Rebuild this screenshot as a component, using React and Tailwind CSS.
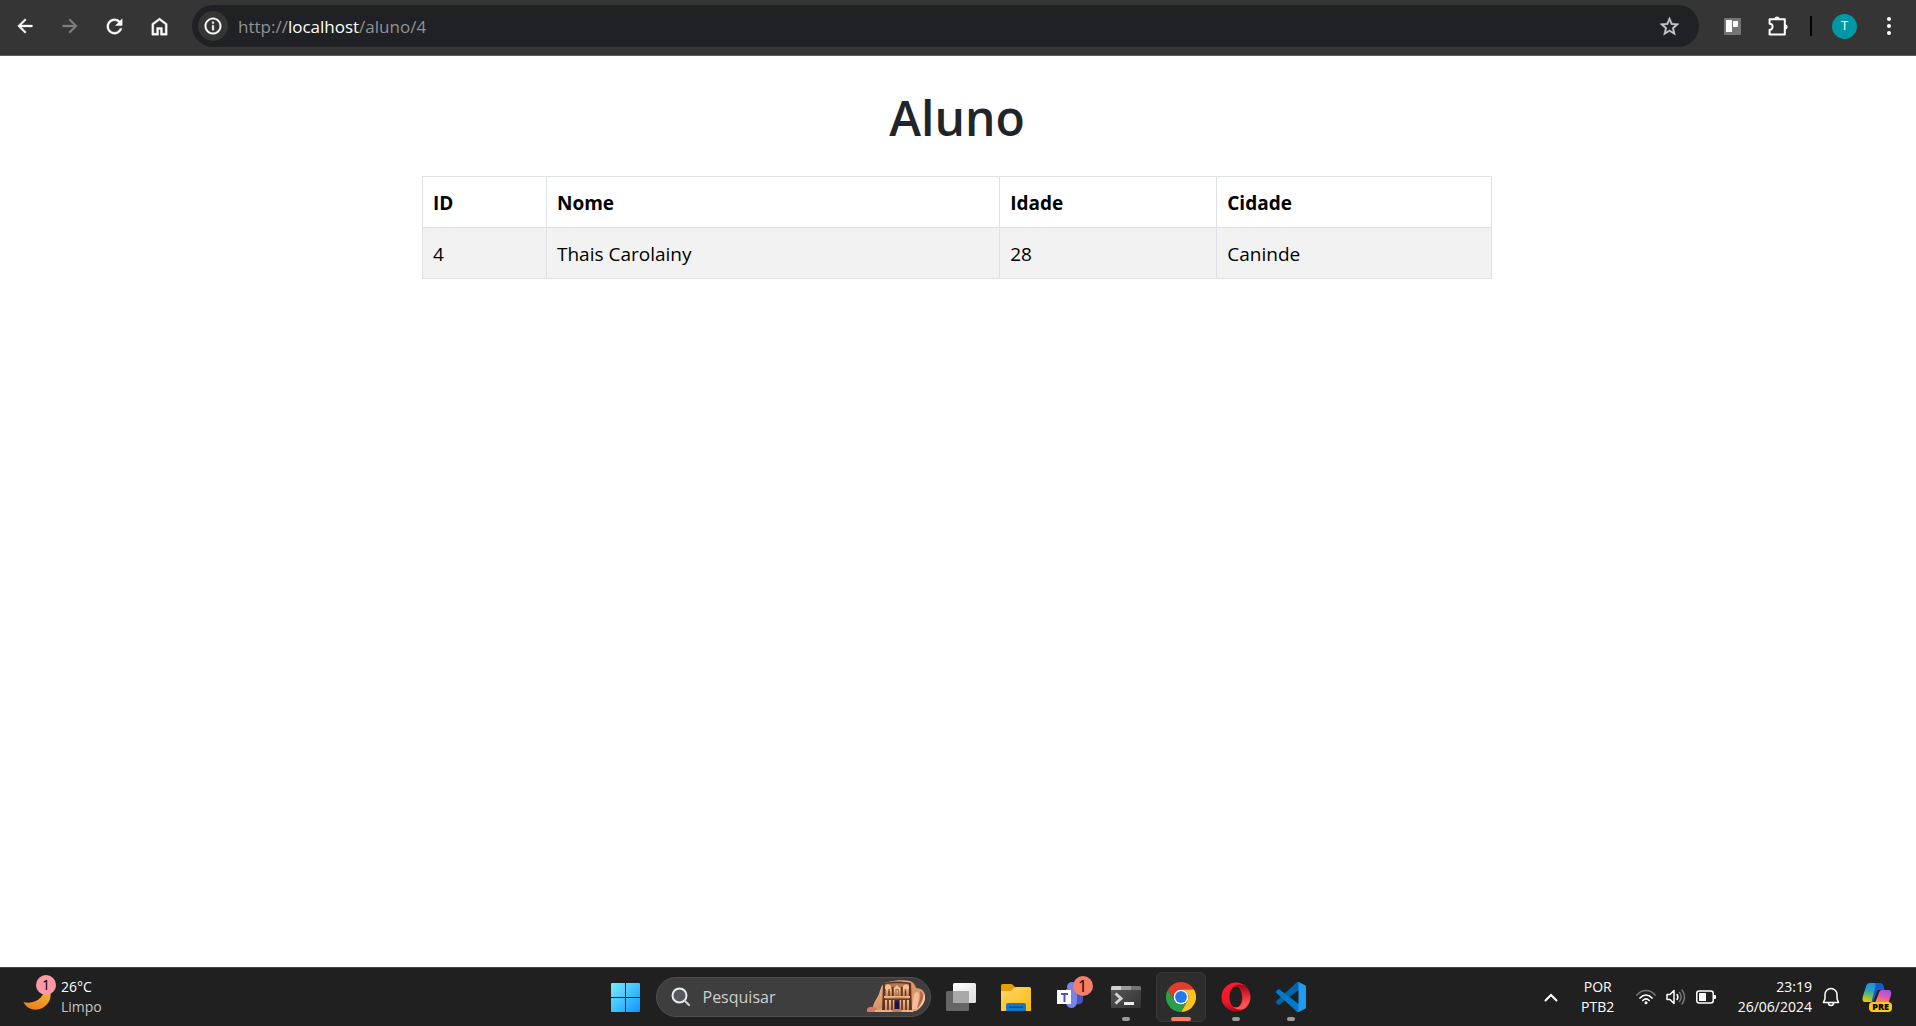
const sans = 'font-["Open_Sans","Noto_Sans",sans-serif]';

/* ---------- Browser toolbar icons ---------- */

const materialPaths = {
  back: 'M20 11H7.83l5.59-5.59L12 4l-8 8 8 8 1.41-1.41L7.83 13H20v-2z',
  forward: 'M12 4l-1.41 1.41L16.17 11H4v2h12.17l-5.58 5.59L12 20l8-8z',
  reload:
    'M17.65 6.35C16.2 4.9 14.21 4 12 4c-4.42 0-7.99 3.58-7.99 8s3.57 8 7.99 8c3.73 0 6.84-2.55 7.73-6h-2.08c-.82 2.33-3.04 4-5.65 4-3.31 0-6-2.69-6-6s2.69-6 6-6c1.66 0 3.14.69 4.22 1.78L13 11h7V4l-2.35 2.35z',
  home: 'M6 19h3v-6h6v6h3v-9l-6-4.5L6 10v9Zm-2 2V9l8-6 8 6v12h-7v-6h-2v6H4Z',
  info: 'M11 17h2v-6h-2v6zm1-15C6.48 2 2 6.48 2 12s4.48 10 10 10 10-4.48 10-10S17.52 2 12 2zm0 18c-4.41 0-8-3.59-8-8s3.59-8 8-8 8 3.59 8 8-3.59 8-8 8zM11 9h2V7h-2v2z',
  star: 'M22 9.24l-7.19-.62L12 2 9.19 8.63 2 9.24l5.46 4.73L5.82 21 12 17.27 18.18 21l-1.63-7.03L22 9.24zM12 15.4l-3.76 2.27 1-4.28-3.32-2.88 4.38-.38L12 6.1l1.71 4.04 4.38.38-3.32 2.88 1 4.28L12 15.4z',
};

function MaterialIcon({ name, className }) {
  return (
    <svg viewBox="0 0 24 24" className={className} fill="currentColor" stroke="currentColor" strokeWidth="0.4" aria-hidden="true">
      <path d={materialPaths[name]} />
    </svg>
  );
}

function BoardIcon() {
  return (
    <svg viewBox="0 0 17 17" className="size-[17px]" aria-hidden="true">
      <rect width="17" height="17" rx="1" fill="#757575" />
      <rect x="2" y="2" width="6" height="12" fill="#fff" />
      <rect x="9" y="3" width="5" height="6" fill="#fff" />
    </svg>
  );
}

function PuzzleIcon() {
  return (
    <svg viewBox="0 0 22 22" className="size-[22px]" fill="none" stroke="#fff" strokeWidth="2" strokeLinejoin="round" aria-hidden="true">
      <path d="M2.6 4.2h15.2v15.2H2.6v-4.6a3 3 0 0 0 0-6z" />
      <path d="M7.4 4a2.6 2.6 0 0 1 5.2 0zM18 9.2a2.6 2.6 0 0 1 0 5.2z" fill="#fff" stroke="none" />
    </svg>
  );
}

function BrowserBar() {
  return (
    <header className="flex h-14 shrink-0 items-center border-b border-[#5c5c5c] bg-[#353535] pb-[3px] text-white">
      <nav className="flex pl-[2px]" aria-label="Navegação">
        <button type="button" aria-label="Voltar" className="grid h-10 w-[45px] place-items-center">
          <MaterialIcon name="back" className="size-[22px]" />
        </button>
        <button type="button" aria-label="Avançar" className="grid h-10 w-[45px] place-items-center text-[#808080]">
          <MaterialIcon name="forward" className="size-[22px]" />
        </button>
        <button type="button" aria-label="Recarregar" className="grid h-10 w-[45px] place-items-center">
          <MaterialIcon name="reload" className="size-[23px]" />
        </button>
        <button type="button" aria-label="Página inicial" className="grid h-10 w-[45px] place-items-center">
          <MaterialIcon name="home" className="size-[23px]" />
        </button>
      </nav>
      <div className="ml-[10px] flex h-[42px] flex-1 items-center rounded-full bg-[#202124] pr-[18px] pl-[6px]">
        <button type="button" aria-label="Informações do site" className="grid size-[30px] place-items-center rounded-full bg-[#353535]">
          <MaterialIcon name="info" className="size-5" />
        </button>
        <div className="ml-[10px] flex-1 pt-[2px] text-[17px] leading-6 text-[#909295]">
          http://<span className="text-white">localhost</span>/aluno/4
        </div>
        <button type="button" aria-label="Favoritar" className="text-[#c7c7c7]">
          <MaterialIcon name="star" className="size-[23px]" />
        </button>
      </div>
      <div className="flex items-center pr-[18px] pl-[25px]">
        <button type="button" aria-label="Quadro">
          <BoardIcon />
        </button>
        <button type="button" aria-label="Extensões" className="ml-[26px]">
          <PuzzleIcon />
        </button>
        <span className="ml-[21px] h-5 w-[2px] bg-black" />
        <button type="button" aria-label="Perfil" className="ml-5 grid size-[25px] place-items-center rounded-full bg-[#0097a7] text-[13px]">
          T
        </button>
        <button type="button" aria-label="Menu" className="ml-[23px]">
          <svg viewBox="0 0 18 20" className="h-5 w-[18px]" fill="#fff" aria-hidden="true">
            <circle cx="9" cy="3" r="2" />
            <circle cx="9" cy="10" r="2" />
            <circle cx="9" cy="17" r="2" />
          </svg>
        </button>
      </div>
    </header>
  );
}

/* ---------- Page ---------- */

const columns = [
  { label: 'ID', width: 'w-[11.6%]' },
  { label: 'Nome', width: 'w-[42.4%]' },
  { label: 'Idade', width: 'w-[20.3%]' },
  { label: 'Cidade', width: 'w-[25.7%]' },
];
const student = ['4', 'Thais Carolainy', '28', 'Caninde'];

function StudentPage() {
  return (
    <main className="flex-1 bg-white pt-8 pr-[18px] pl-4 text-black">
      <div className="mx-auto max-w-[1070px]">
        <h1 className="text-center text-5xl leading-[60px] font-semibold text-[#212529]">Aluno</h1>
        <table className="mt-7 w-full table-fixed border-collapse text-left text-[19px] leading-[30px]">
          <thead>
            <tr>
              {columns.map((c) => (
                <th key={c.label} scope="col" className={`${c.width} border border-[#dee2e6] px-[10px] pt-[11px] pb-[9px] font-bold`}>
                  {c.label}
                </th>
              ))}
            </tr>
          </thead>
          <tbody>
            <tr className="bg-[#f2f2f2]">
              {student.map((value) => (
                <td key={value} className="border border-[#dee2e6] px-[10px] pt-[11px] pb-[9px]">
                  {value}
                </td>
              ))}
            </tr>
          </tbody>
        </table>
      </div>
    </main>
  );
}

/* ---------- Taskbar icons ---------- */

function MoonIcon() {
  return (
    <svg viewBox="0 0 30 30" className="size-[30px]" aria-hidden="true">
      <defs>
        <linearGradient id="moon" x1="0.7" y1="0" x2="0.4" y2="1">
          <stop offset="0" stopColor="#f8c53a" />
          <stop offset="1" stopColor="#ee7d1c" />
        </linearGradient>
      </defs>
      <path d="M23 2c7 7 6 18-2 23-7 5-17 3-20.500-5 12 3 22-5 22.500-18z" fill="url(#moon)" />
    </svg>
  );
}

function WindowsIcon() {
  return (
    <svg viewBox="0 0 29 29" className="size-[29px]" aria-hidden="true">
      <defs>
        <linearGradient id="win" x1="0" y1="0" x2="29" y2="29" gradientUnits="userSpaceOnUse">
          <stop offset="0" stopColor="#77eeff" />
          <stop offset="1" stopColor="#0f94fb" />
        </linearGradient>
      </defs>
      <path d="M1 0h13v14H0V1a1 1 0 0 1 1-1zM15 0h13a1 1 0 0 1 1 1v13H15zM0 15h14v14H1a1 1 0 0 1-1-1zM15 15h14v13a1 1 0 0 1-1 1H15z" fill="url(#win)" />
    </svg>
  );
}

function SearchIcon() {
  return (
    <svg viewBox="0 0 20 20" className="size-5" fill="none" strokeLinecap="round" aria-hidden="true">
      <circle cx="8.500" cy="8.500" r="7" stroke="#e8edf0" strokeWidth="2" fill="#555a5e" />
      <path d="M14 14l4 4" stroke="#cfcfcf" strokeWidth="2.200" />
    </svg>
  );
}

function PetraArt() {
  return (
    <svg viewBox="0 0 60 34" className="h-[34px] w-[60px]" aria-hidden="true">
      <defs>
        <linearGradient id="rock" x1="0" y1="0" x2="1" y2="1">
          <stop offset="0" stopColor="#f3be93" />
          <stop offset="0.500" stopColor="#d99268" />
          <stop offset="1" stopColor="#eba980" />
        </linearGradient>
        <linearGradient id="facade" x1="0" y1="0" x2="0" y2="1">
          <stop offset="0" stopColor="#b87a4e" />
          <stop offset="1" stopColor="#8a4c33" />
        </linearGradient>
        <linearGradient id="pillar" x1="0" y1="0" x2="0" y2="1">
          <stop offset="0" stopColor="#f0c091" />
          <stop offset="1" stopColor="#c97f5c" />
        </linearGradient>
      </defs>
      <path d="M6 31c-1-8 4-12 6-17 2-6 3-12 9-12 8-2 16-2 22-1 3 1 5 3 6 7 6 0 9 4 9 8 0 7-3 11-9 15z" fill="url(#rock)" />
      <path d="M0 29c2-3 7-3 10 0l1 3H2c-2 0-3-1-2-3z" fill="#cc7f63" />
      <path d="M47 15c1-4 4-4 5 0l-2 14h-5z" fill="#f6bd9b" />
      <path d="M53 11c5 3 5 10-3 17 2-6 4-11 3-17z" fill="#ad6a4b" />
      <path d="M57 14c3 5-1 11-6 15 3-5 5-9 6-15z" fill="#ffc9a8" />
      <path d="M16 3c9-2 19-2 28 0l1 28H15z" fill="#5c3520" />
      <path d="M18 4c8-1 16-1 24 0v26H18z" fill="url(#facade)" />
      <path d="M18 6l3-2 3 2v3h-6zM36 6l3-2 3 2v3h-6zM26 9l4-4 4 4z" fill="#f0bf94" />
      <path d="M19 9h2v7h-2zM23 9h1.500v7H23zM36 9h1.500v7H36zM39.500 9h2v7h-2zM27 9h1.500v7H27zM32 9h1.500v7H32zM29.500 10h1.500v5h-1.500z" fill="url(#pillar)" />
      <path d="M25 7h1.500v9H25zM34 7h1.500v9H34zM21.500 11h1v5h-1zM38 11h1v5h-1z" fill="#5c3520" />
      <path d="M17 16h26v2l-12-.5L17 18z" fill="#efb78d" />
      <path d="M17 19h26v1H17z" fill="#6b3b26" />
      <path d="M18 20h2v11h-2zM22 20h2v11h-2zM26 20h1.500v11H26zM32.500 20H34v11h-1.500zM36 20h2v11h-2zM40 20h2v11h-2z" fill="url(#pillar)" />
      <path d="M20.500 20h1v10h-1zM24.500 20h1v10h-1zM34.500 20h1v10h-1zM38.500 20h1v10h-1z" fill="#5a2f20" />
      <path d="M27.500 20h5v10h-5z" fill="#3a2030" />
      <path d="M28 22h4v7h-4z" fill="#17164a" />
      <path d="M8 30h40l-2 2H8z" fill="#f0ae84" />
      <path d="M26 29h8l1 3H25z" fill="#c47a58" />
    </svg>
  );
}

function TaskViewIcon() {
  return (
    <svg viewBox="0 0 30 28" className="h-7 w-[30px]" aria-hidden="true">
      <defs>
        <linearGradient id="tv1" x1="0" y1="0" x2="1" y2="1">
          <stop offset="0" stopColor="#fff" />
          <stop offset="1" stopColor="#dcdcdc" />
        </linearGradient>
      </defs>
      <rect x="0" y="8" width="23" height="20" rx="1.500" fill="#666" />
      <rect x="7" y="0" width="23" height="20" rx="1.500" fill="url(#tv1)" />
      <path d="M7 8h16v12H7z" fill="#a9a9a9" />
    </svg>
  );
}

function FolderIcon() {
  return (
    <svg viewBox="0 0 30 27" className="h-[27px] w-[30px]" aria-hidden="true">
      <defs>
        <linearGradient id="fold" x1="0" y1="0" x2="1" y2="1">
          <stop offset="0" stopColor="#ffd868" />
          <stop offset="1" stopColor="#fdb912" />
        </linearGradient>
      </defs>
      <path d="M0 1.500Q0 0 1.500 0H10q1 0 2 1l2 2v5H0z" fill="#e3a008" />
      <path d="M0 7h9q1 0 2-1l2-2q1-1 2-1h13.500Q30 3 30 4.500V27H0z" fill="url(#fold)" />
      <path d="M5 27v-6q0-2 2-2h16q2 0 2 2v6z" fill="#1179cc" />
      <path d="M8 22.500h14v1.500H8z" fill="#0b4b8c" />
    </svg>
  );
}

function TeamsIcon() {
  return (
    <svg viewBox="0 0 27 34" className="h-[34px] w-[27px]" aria-hidden="true">
      <circle cx="22" cy="7" r="3.500" fill="#4f59c6" />
      <path d="M18 10h8v10c0 4-4 5-8 4z" fill="#4b53bc" />
      <circle cx="15" cy="7" r="5" fill="#7b83eb" />
      <path d="M9 9h11v12c0 4-2 7-5.500 7S9 25 9 22z" fill="#7b83eb" />
      <rect x="0" y="10" width="14" height="14" fill="#fff" />
      <path d="M4 13h7v2H8.500v7h-2v-7H4z" fill="#4b53bc" />
    </svg>
  );
}

function TerminalIcon() {
  return (
    <svg viewBox="0 0 30 22" className="h-[22px] w-[30px]" aria-hidden="true">
      <defs>
        <linearGradient id="term" x1="0" y1="0" x2="1" y2="1">
          <stop offset="0" stopColor="#585858" />
          <stop offset="1" stopColor="#333" />
        </linearGradient>
      </defs>
      <rect width="30" height="22" rx="1.500" fill="url(#term)" />
      <path d="M1.500 0H10v4H0V1.500Q0 0 1.500 0z" fill="#d0d0d0" />
      <path d="M10 0h10v4H10z" fill="#9a9a9a" />
      <path d="M20 0h8.500Q30 0 30 1.500V4H20z" fill="#727272" />
      <path d="M4.500 7.500l5.500 5-5.500 5" fill="none" stroke="#d4d4d4" strokeWidth="3" />
      <path d="M13 16h10v3H13z" fill="#ececec" />
    </svg>
  );
}

function ChromeIcon() {
  return (
    <svg viewBox="0 0 48 48" className="size-[30px]" aria-hidden="true">
      <circle cx="24" cy="24" r="12" fill="#fff" />
      <path d="M24 12h20.781a23.994 23.994 0 0 0-41.564.003L13.608 30l.009-.002A11.985 11.985 0 0 1 24 12z" fill="#e33b2e" />
      <path d="M34.391 30.003L24.001 48A23.994 23.994 0 0 0 44.780 12.003H23.999l-.003.009a11.985 11.985 0 0 1 10.395 17.991z" fill="#fcc31e" />
      <path d="M13.609 30.003L3.218 12.006A23.994 23.994 0 0 0 24.003 48l10.390-17.997-.007-.007a11.985 11.985 0 0 1-20.777.007z" fill="#2aa04a" />
      <circle cx="24" cy="24" r="9.500" fill="#2478ea" />
    </svg>
  );
}

function OperaIcon() {
  return (
    <svg viewBox="0 0 30 30" className="size-[30px]" aria-hidden="true">
      <defs>
        <linearGradient id="op1" x1="0" y1="0" x2="0" y2="1">
          <stop offset="0" stopColor="#ff1b2d" />
          <stop offset="0.700" stopColor="#ee1628" />
          <stop offset="1" stopColor="#b50016" />
        </linearGradient>
        <linearGradient id="op2" x1="0" y1="0" x2="0" y2="1">
          <stop offset="0" stopColor="#9a0010" />
          <stop offset="0.700" stopColor="#ff4b4b" />
          <stop offset="1" stopColor="#ff5a5a" />
        </linearGradient>
      </defs>
      <path d="M15 0.500a14.500 14.500 0 1 0 0 29 14.500 14.500 0 0 0 9.500-3.500V4A14.500 14.500 0 0 0 15 .5zm0 4c3.800 0 6 4.700 6 10.500s-2.200 10.500-6 10.500S8.500 21 8.500 15 11.200 4.500 15 4.500z" fill="url(#op1)" />
      <path d="M11 6c4-4 9-4.500 13.500-2a14.500 14.500 0 0 1 0 22C20 28.500 15 28 11 24c6 4 11-1 11-9S17 2 11 6z" fill="url(#op2)" />
    </svg>
  );
}

function CodeIcon() {
  return (
    <svg viewBox="0 0 100 100" className="size-[30px]" aria-hidden="true">
      <path d="M96.500 10.700L75.900.8c-2.400-1.200-5.200-.7-7.100 1.200L1.300 63.500a4.200 4.200 0 0 0 0 6.200l5.500 5c1.500 1.400 3.700 1.500 5.300.2l81.200-61.600c2.700-2 6.700-.1 6.700 3.300v-.2c0-2.400-1.400-4.600-3.500-5.700z" fill="#0065a9" />
      <path d="M96.500 89.300l-20.600 9.900c-2.400 1.200-5.200.7-7.100-1.200L1.300 36.500a4.200 4.200 0 0 1 0-6.200l5.500-5c1.500-1.400 3.700-1.500 5.300-.2l81.200 61.600c2.700 2 6.700.1 6.700-3.300v.2c0 2.400-1.400 4.600-3.500 5.700z" fill="#007acc" />
      <path d="M75.900 99.200c-2.400 1.200-5.200.7-7.100-1.200 2.300 2.300 6.200.7 6.200-2.600V4.600c0-3.300-3.900-4.900-6.200-2.600 1.900-1.900 4.700-2.400 7.100-1.200l20.600 9.900c2.100 1 3.500 3.200 3.500 5.600v67.400c0 2.400-1.400 4.600-3.500 5.600z" fill="#1f9cf0" />
    </svg>
  );
}

function WifiIcon() {
  return (
    <svg viewBox="0 0 20 16" className="h-4 w-5" fill="none" strokeWidth="1.700" strokeLinecap="round" aria-hidden="true">
      <path d="M1 6c5-6 13-6 18 0" stroke="#777" />
      <path d="M4 9c3.500-4 8.500-4 12 0" stroke="#fff" />
      <path d="M6.800 11.500c2-2 4.400-2 6.400 0" stroke="#fff" />
      <circle cx="10" cy="13.800" r="1.500" fill="#fff" />
    </svg>
  );
}

function VolumeIcon() {
  return (
    <svg viewBox="0 0 20 18" className="h-[18px] w-5" fill="none" strokeWidth="1.500" strokeLinecap="round" strokeLinejoin="round" aria-hidden="true">
      <path d="M1 6.500h3l4-4v13l-4-4H1z" stroke="#fff" />
      <path d="M11 6.500q1.800 2.500 0 5" stroke="#fff" />
      <path d="M13.500 4.500q3.400 4.500 0 9M16 2q5 7 0 14" stroke="#777" />
    </svg>
  );
}

function BatteryIcon() {
  return (
    <svg viewBox="0 0 20 14" className="h-[14px] w-5" aria-hidden="true">
      <rect x="0.750" y="1" width="16.500" height="12" rx="2.500" fill="none" stroke="#fff" strokeWidth="1.500" />
      <rect x="3" y="3" width="7" height="8" rx="0.500" fill="#fff" />
      <path d="M18 5h1q1 0 1 1v2q0 1-1 1h-1z" fill="#fff" />
    </svg>
  );
}

function BellIcon() {
  return (
    <svg viewBox="0 0 18 20" className="h-5 w-[18px]" fill="none" stroke="#fff" strokeWidth="1.500" strokeLinejoin="round" aria-hidden="true">
      <path d="M9 1.500a6 6 0 0 0-6 6v4L1.500 15.500h15L15 11.500v-4a6 6 0 0 0-6-6z" />
      <path d="M6.500 16a2.500 2.500 0 0 0 5 0" />
    </svg>
  );
}

function CopilotIcon() {
  return (
    <svg viewBox="0 0 30 30" className="size-[30px]" aria-hidden="true">
      <defs>
        <linearGradient id="cp1" x1="0.500" y1="0" x2="0.350" y2="1">
          <stop offset="0" stopColor="#2090e8" />
          <stop offset="0.400" stopColor="#2aa3c0" />
          <stop offset="0.700" stopColor="#7fbf55" />
          <stop offset="1" stopColor="#f0c800" />
        </linearGradient>
        <linearGradient id="cp2" x1="0.700" y1="0" x2="0.300" y2="1">
          <stop offset="0" stopColor="#a050f0" />
          <stop offset="0.500" stopColor="#e55aa8" />
          <stop offset="1" stopColor="#ff8a5a" />
        </linearGradient>
      </defs>
      <path d="M8 1h9c-2 2-3 5-4 9l-3 10H3c-2 0-3-2-2.300-5L4 4.500C4.800 2 6 1 8 1z" fill="url(#cp1)" />
      <path d="M13 1h5c2 0 3 1 3.500 3l1 4H18c-2 0-3 1-3.500 3L12 20H9.500l3-12C13 5 14 3 13 1z" fill="#1a56cc" />
      <path d="M16 8h6.500L18 20h-7z" fill="#202020" />
      <path d="M20 8h6c3 0 3.500 2 3 5l-2.500 8H13l3.500-9c1-3 1.500-4 3.500-4z" fill="url(#cp2)" />
    </svg>
  );
}

/* ---------- Taskbar ---------- */

const apps = [
  { name: 'Visão de tarefas', Icon: TaskViewIcon },
  { name: 'Explorador de Arquivos', Icon: FolderIcon },
  { name: 'Teams', Icon: TeamsIcon, badge: '1' },
  { name: 'Terminal', Icon: TerminalIcon, running: true },
  { name: 'Chrome', Icon: ChromeIcon, active: true },
  { name: 'Opera', Icon: OperaIcon, running: true },
  { name: 'Visual Studio Code', Icon: CodeIcon, running: true },
];

function AppButton({ name, Icon, badge, running, active }) {
  const tile = active ? 'border-[#383838] bg-[#2d2d2d]' : 'border-transparent';
  return (
    <button type="button" aria-label={name} className={`relative grid size-[50px] place-items-center rounded-md border ${tile}`}>
      <Icon />
      {badge && (
        <span className="absolute top-[3px] right-[2px] grid size-5 place-items-center rounded-full bg-[#f47f66] text-base leading-5 text-black">
          {badge}
        </span>
      )}
      {running && <span className="absolute bottom-0 left-5 h-1 w-2 rounded-full bg-[#9a9a9a]" />}
      {active && <span className="absolute bottom-0 left-[14px] h-1 w-5 rounded-full bg-[#f47f66]" />}
    </button>
  );
}

function Taskbar() {
  return (
    <footer className="grid h-[59px] shrink-0 grid-cols-[1fr_auto_1fr] items-center border-t border-[#444] bg-[#202020] text-white">
      <button type="button" className="flex h-full items-center justify-self-start pl-[23px] text-left">
        <span className="relative block">
          <MoonIcon />
          <span className="absolute -top-[7px] left-[13px] grid size-5 place-items-center rounded-full bg-[#ff99a4] text-sm leading-5 text-black">
            1
          </span>
        </span>
        <span className="ml-2 text-[14px] leading-5">
          <span className="block">26°C</span>
          <span className="block text-[#c4c4c4]">Limpo</span>
        </span>
      </button>

      <div className="flex items-center gap-[5px]">
        <button type="button" aria-label="Iniciar" className="grid size-[50px] place-items-center">
          <WindowsIcon />
        </button>
        <label className="flex h-10 w-[275px] items-center rounded-full border border-[#505050] bg-[#3e3e3e] pr-[3px] pl-[14px]">
          <SearchIcon />
          <input
            type="text"
            aria-label="Pesquisar"
            placeholder="Pesquisar"
            className="ml-3 min-w-0 flex-1 bg-transparent text-base outline-none placeholder:text-[#cfcfcf]"
          />
          <PetraArt />
        </label>
        {apps.map((app) => (
          <AppButton key={app.name} {...app} />
        ))}
      </div>

      <div className="flex items-center justify-self-end pr-6 text-[14px] leading-5">
        <button type="button" aria-label="Mostrar ícones ocultos">
          <svg viewBox="0 0 14 9" className="h-[9px] w-[14px]" fill="none" stroke="#fff" strokeWidth="2" strokeLinecap="round" aria-hidden="true">
            <path d="M1.500 7.500L7 2l5.500 5.500" />
          </svg>
        </button>
        <button type="button" className="ml-[23px] w-[34px] text-center">
          <span className="block">POR</span>
          <span className="block">PTB2</span>
        </button>
        <button type="button" aria-label="Rede, som e bateria" className="ml-[21px] flex items-center gap-[10px]">
          <WifiIcon />
          <VolumeIcon />
          <BatteryIcon />
        </button>
        <button type="button" className="ml-[22px] text-right">
          <span className="block">23:19</span>
          <span className="block">26/06/2024</span>
        </button>
        <button type="button" aria-label="Notificações" className="ml-[10px]">
          <BellIcon />
        </button>
        <button type="button" aria-label="Copilot" className="relative ml-[22px]">
          <CopilotIcon />
          <span className="absolute right-0 bottom-0 rounded-sm bg-[#ffc90e] px-[3px] text-[9px] leading-[10px] font-extrabold text-black">PRE</span>
        </button>
      </div>
    </footer>
  );
}

export default function App() {
  return (
    <div className={`flex min-h-screen flex-col ${sans}`}>
      <BrowserBar />
      <StudentPage />
      <Taskbar />
    </div>
  );
}
